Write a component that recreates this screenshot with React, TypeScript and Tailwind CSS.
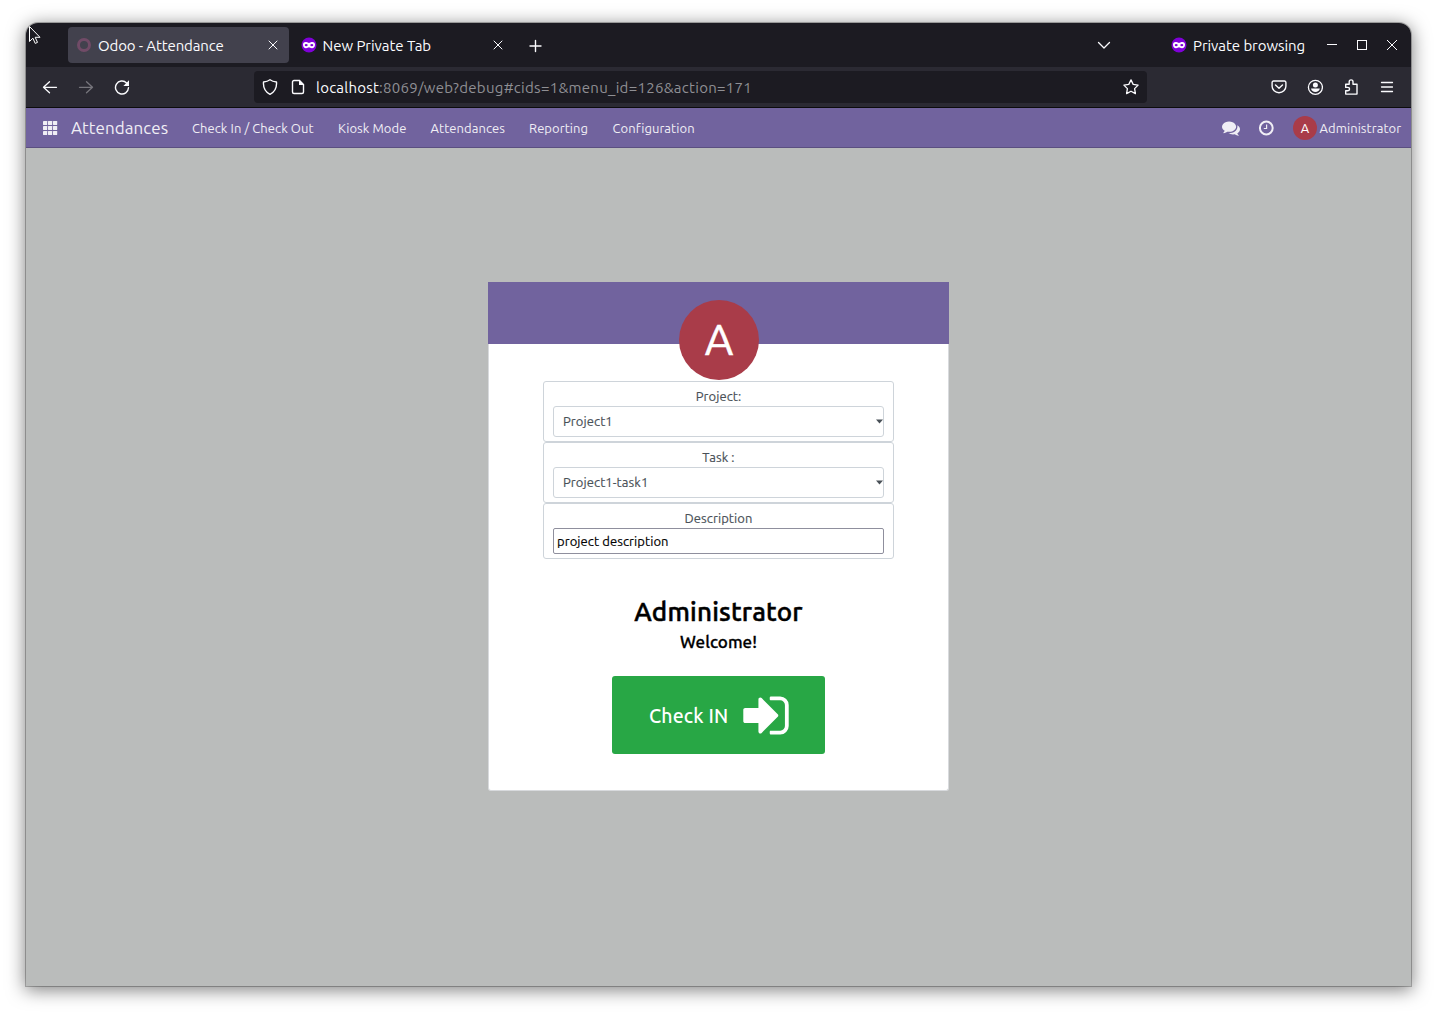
import type { ReactNode } from 'react';

const MaskIcon = () => (
  <svg width="16" height="16" viewBox="0 0 16 16" className="shrink-0">
    <circle cx="8" cy="8" r="7.5" fill="#7f00d8" />
    <path
      d="M2 7.600C2 5.300 3.900 4.700 5.400 5c1.100.2 1.800.9 2.600.9s1.500-.7 2.600-.9c1.500-.3 3.400.3 3.400 2.600 0 2.500-1.400 3.700-3 3.700-1.500 0-2.100-1-3-1s-1.500 1-3 1c-1.600 0-3-1.200-3-3.700z"
      fill="#fff"
    />
    <ellipse cx="5.200" cy="8.100" rx="1.500" ry="1.200" fill="#7f00d8" />
    <ellipse cx="10.800" cy="8.100" rx="1.500" ry="1.200" fill="#7f00d8" />
  </svg>
);

const Line = ({ d, size = 16, stroke = '#fbfbfe', width = 1.3 }: { d: string; size?: number; stroke?: string; width?: number }) => (
  <svg width={size} height={size} viewBox="0 0 16 16" fill="none" stroke={stroke} strokeWidth={width} strokeLinecap="round" strokeLinejoin="round" className="shrink-0">
    <path d={d} />
  </svg>
);

const CLOSE = 'M4 4l8 8M12 4l-8 8';

const TabBar = () => (
  <div className="flex h-11 items-center bg-[#1c1b22] pl-[42px] text-[15px] text-[#fbfbfe]">
    <div className="flex h-9 w-[221px] items-center rounded bg-[#42414d] pl-2">
      <svg width="16" height="16" viewBox="0 0 16 16" className="shrink-0">
        <circle cx="8" cy="8" r="5.500" fill="none" stroke="#714b67" strokeWidth="3" />
      </svg>
      <span className="ml-[6px] w-[159px] whitespace-nowrap pt-[2px] tracking-[-0.12px]">Odoo - Attendance</span>
      <span className="ml-2"><Line d={CLOSE} width={1} /></span>
    </div>
    <div className="flex w-[225px] items-center pl-3">
      <MaskIcon />
      <span className="ml-[5.500px] w-[155.500px] whitespace-nowrap pt-[2px] tracking-[-0.04px]">New Private Tab</span>
      <span className="ml-3"><Line d={CLOSE} width={1} /></span>
    </div>
    <span className="ml-[13px] pt-px"><Line d="M8.500 2.500v11M3 8h11" width={1.400} /></span>
    <span className="ml-[553px]"><Line d="M2.500 5.500L8 11l5.500-5.500" /></span>
    <div className="ml-[59px] flex w-[140px] items-center">
      <MaskIcon />
      <span className="ml-[6px] whitespace-nowrap pt-[2px] tracking-[-0.06px]">Private browsing</span>
    </div>
    <svg width="72" height="16" viewBox="0 0 72 16" fill="none" stroke="#fbfbfe" className="ml-[15px] shrink-0">
      <path d="M1 7.500h10" />
      <rect x="31.500" y="3.500" width="9" height="9" />
      <path d="M61 3l10 10M71 3l-10 10" />
    </svg>
  </div>
);

const Toolbar = () => (
  <div className="flex h-[41px] items-center border-b border-[#0c0c0d] bg-[#2b2a33] pl-4">
    <Line d="M14.500 8.300H1.500M7.500 2.800L1.500 8.300l6 5.500" />
    <span className="ml-5"><Line d="M1.500 8.300h13M8.500 2.800l6 5.500-6 5.500" stroke="#76757c" /></span>
    <svg width="16" height="16" viewBox="0 0 16 16" className="ml-5 shrink-0" fill="none">
      <path d="M12.600 3.900A6.500 6.500 0 1 0 14.500 8.800" stroke="#fbfbfe" strokeWidth="1.400" strokeLinecap="round" />
      <path d="M15 1.300v5.600H9.400z" fill="#fbfbfe" />
    </svg>
    <div className="ml-[124px] flex h-8 w-[893px] items-center rounded bg-[#1c1b22] pl-2 text-[15px] text-[#8f8f94]">
      <Line d="M8 .8c1.700 1.300 4 2 6.500 2.200.4 5-1.200 9.500-6.500 12.300C2.700 12.500 1.100 8 1.500 3 4 2.800 6.300 2.100 8 .8z" width={1.4} />
      <svg width="16" height="16" viewBox="0 0 16 16" className="ml-3 shrink-0">
        <path d="M4 1.500h5.500l4 4V13a1.500 1.500 0 0 1-1.500 1.500H4A1.500 1.500 0 0 1 2.500 13V3A1.500 1.500 0 0 1 4 1.500z" fill="none" stroke="#fbfbfe" strokeWidth="1.400" />
        <path d="M9 1v5h5z" fill="#fbfbfe" />
      </svg>
      <span className="ml-[10px] w-[807px] whitespace-nowrap pt-[2px] tracking-[0.29px]">
        <span className="tracking-[0.22px] text-[#fbfbfe]">localhost</span>:8069/web?debug#cids=1&amp;menu_id=126&amp;action=171
      </span>
      <Line d="M8 .9l2.200 4.500 4.900.7-3.500 3.500.8 5L8 12.200l-4.400 2.400.8-5L.9 6.100l4.900-.7z" />
    </div>
    <div className="ml-[124px] flex items-center gap-5">
      <Line d="M2.500 2h11A1.400 1.400 0 0 1 14.900 3.400V7.200a6.900 6.500 0 0 1-13.800 0V3.400A1.400 1.400 0 0 1 2.500 2zM4.500 6L8 9.200 11.500 6" width={1.4} />
      <svg width="16" height="16" viewBox="0 0 16 16" className="shrink-0">
        <circle cx="8.400" cy="8.300" r="7" fill="none" stroke="#fbfbfe" strokeWidth="1.300" />
        <circle cx="8.400" cy="6.100" r="2.500" fill="#fbfbfe" />
        <path d="M4 9.500h8.800c-.3 2.200-2.200 3.600-4.400 3.600s-4.100-1.400-4.400-3.600z" fill="#fbfbfe" />
      </svg>
      <Line d="M2.700 15.100h11.300V5.200H10V2.800a1.900 1.900 0 0 0-3.800 0v2.400H2.700v3.200h2.200a1.600 1.600 0 0 1 0 3.300H2.700z" width={1.4} />
      <Line d="M2.500 3.500h11M2.500 8h11M2.500 12.500h11" />
    </div>
  </div>
);

const NavItem = ({ width, children }: { width: string; children: ReactNode }) => (
  <span className={`shrink-0 whitespace-nowrap pt-[2px] ${width}`}>{children}</span>
);

const Navbar = () => (
  <nav className="flex h-10 items-center border-b border-[#5b4f80] bg-[#71639e] pl-[17px] text-[13px] tracking-[0.06px] text-[#f0eef5]">
    <svg width="15" height="14" viewBox="0 0 15 14" fill="#f0eef5" className="shrink-0">
      {[0, 5, 10].map((y) => [0, 5, 10].map((x) => <rect key={`${x}-${y}`} x={x} y={y} width="4.200" height="4" rx=".4" />))}
    </svg>
    <span className="ml-[13px] w-[121px] whitespace-nowrap text-[17px]">Attendances</span>
    <NavItem width="w-[146px]">Check In / Check Out</NavItem>
    <NavItem width="w-[92.500px]">Kiosk Mode</NavItem>
    <NavItem width="w-[98.500px]">Attendances</NavItem>
    <NavItem width="w-[83.500px]">Reporting</NavItem>
    <NavItem width="w-[609.500px]">Configuration</NavItem>
    <svg width="18" height="18" viewBox="0 0 1792 1792" fill="#f0eef5" className="shrink-0">
      <path d="M1408 768q0 139-94 257t-256.500 186.500T704 1280q-86 0-176-16-124 88-278 128-36 9-86 16h-3q-11 0-20.500-8t-11.500-21q-1-3-1-6.500t.5-6.500 2-6l2.500-5 3.500-5.500 4-5 4.500-5 4-4.500q5-6 23-25t26-29.500 22.500-29 25-38.500 20.500-44q-124-72-195-177T0 768q0-139 94-257t256.500-186.500T704 256t353.500 68.500T1314 511t94 257zm384 256q0 120-71 224.500T1526 1425q10 24 20.500 44t25 38.500 22.500 29 26 29.500 23 25q1 1 4 4.500t4.500 5 4 5 3.500 5.500l2.500 5 2 6 .5 6.500-1 6.500q-3 14-13 22t-22 7q-50-7-86-16-154-40-278-128-90 16-176 16-271 0-472-132 58 4 88 4 161 0 309-45t264-129q125-92 192-212t67-254q0-77-23-152 129 71 204 178t75 230z" />
    </svg>
    <svg width="16" height="16" viewBox="0 0 16 16" fill="none" stroke="#f0eef5" className="ml-[18px] shrink-0">
      <circle cx="8.300" cy="8" r="6.400" strokeWidth="2" />
      <path d="M8.600 4.500v4H5.800" strokeWidth="1.200" />
    </svg>
    <span className="ml-[19px] flex size-6 shrink-0 items-center justify-center rounded-full bg-[#a93c49] pt-[2px] text-[13px] text-white">A</span>
    <span className="ml-[2.500px] whitespace-nowrap pt-[2px]">Administrator</span>
  </nav>
);

const SelectField = ({ label, value }: { label: string; value: string }) => (
  <div className="h-[61px] rounded-[3px] border border-[#ced4da] px-[9px] pt-[5px]">
    <div className="h-[19px] text-center leading-[19px]">{label}</div>
    <div className="flex h-[31px] items-center justify-between rounded-[3px] border border-[#ced4da] pl-[9px]">
      <span>{value}</span>
      <svg width="7" height="6" viewBox="0 0 7 6" fill="#495057">
        <path d="M0 .5h7L3.500 4.500z" />
      </svg>
    </div>
  </div>
);

const Card = () => (
  <div className="relative flex h-[509px] w-[461px] flex-col items-center rounded-b-[3px] border-x border-b border-[#d8dadd] bg-white">
    <div className="h-[62px] w-[461px] shrink-0 bg-[#71639e]" />
    <div className="absolute left-[190px] top-[18px] flex size-20 items-center justify-center rounded-full bg-[#a93c49] pb-0.5 text-[44px] text-white">
      <span className="[-webkit-text-stroke:0.5px_white]">A</span>
    </div>
    <div className="mt-[37px] w-[351px] text-[13px] tracking-[0.08px] text-[#495057] [-webkit-text-stroke:0.15px_currentColor]">
      <SelectField label="Project:" value="Project1" />
      <SelectField label="Task :" value="Project1-task1" />
      <div className="h-14 rounded-[3px] border border-[#ced4da] px-[9px] pt-[5px]">
        <div className="h-[19px] text-center leading-[19px]">Description</div>
        <div className="flex h-[26px] items-center rounded-[2px] border border-[#8f8f9d] pl-[3px] pt-px text-black">project description</div>
      </div>
    </div>
    <h1 className="mt-[37px] h-8 whitespace-nowrap text-[26px] font-medium leading-8 tracking-[0.2px] text-black [-webkit-text-stroke:0.5px_black]">Administrator</h1>
    <h4 className="mt-[4px] h-5 whitespace-nowrap text-[17px] font-medium leading-5 text-black [-webkit-text-stroke:0.3px_black]">Welcome!</h4>
    <div className="mt-6 flex h-[78px] w-[213px] shrink-0 items-center rounded-[3px] bg-[#28a745] pl-[37px] text-[19.500px] font-medium text-white">
      <span className="w-[94px] whitespace-nowrap pt-[4px] tracking-[0.15px]">Check IN</span>
      <svg width="46" height="53" viewBox="0 0 1536 1792" fill="#fff" className="shrink-0">
        <path d="M1184 896q0 26-19 45l-544 544q-19 19-45 19t-45-19-19-45v-288H64q-26 0-45-19T0 1088V704q0-26 19-45t45-19h448V352q0-26 19-45t45-19 45 19l544 544q19 19 19 45zm352-352v704q0 119-84.500 203.500T1248 1536H928q-13 0-22.500-9.500T896 1504q0-4-1-20t-.5-26.500 3-23.500 10-19.500T928 1408h320q66 0 113-47t47-113V544q0-66-47-113t-113-47H936l-11.500-1-11.500-3-8-5.500-7-9-2-13.500q0-4-1-20t-.5-26.500 3-23.500 10-19.500T928 256h320q119 0 203.500 84.500T1536 544z" />
      </svg>
    </div>
  </div>
);

export default function App() {
  return (
    <div className="relative h-[1015px] w-[1437px] overflow-hidden bg-white pl-[26px] pt-[23px] font-['Ubuntu','Noto_Sans',sans-serif]">
      <div className="flex h-[963px] w-[1385px] flex-col overflow-hidden rounded-t-xl bg-[#babcbb] shadow-[0_0_0_1px_rgba(0,0,0,0.25),0_3px_18px_1px_rgba(0,0,0,0.5)]">
        <TabBar />
        <Toolbar />
        <Navbar />
        <main className="flex justify-center pt-[134px]">
          <Card />
        </main>
      </div>
      <svg width="14" height="20" viewBox="0 0 14 20" className="absolute left-[28px] top-[25px]">
        <path d="M1.500 1.500v15l3.400-3.300 2.300 5.200 2.300-1-2.300-5.100H12z" fill="#1c1b22" stroke="#fff" />
      </svg>
    </div>
  );
}
